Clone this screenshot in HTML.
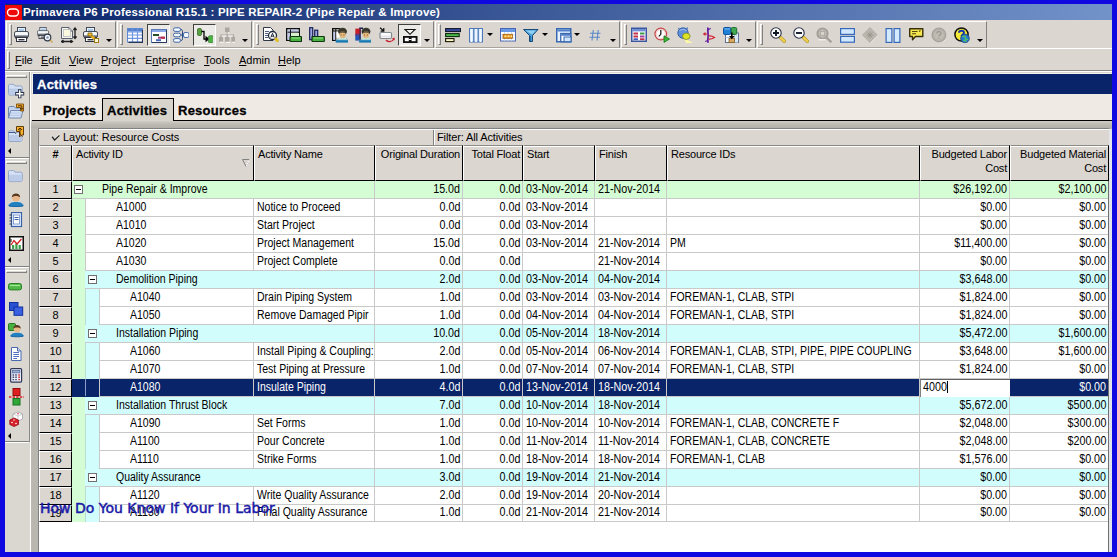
<!DOCTYPE html><html><head><meta charset="utf-8"><title>Primavera P6 Professional</title><style>
html,body{margin:0;padding:0}
body{width:1117px;height:557px;overflow:hidden;background:#1008e0;position:relative;font-family:"Liberation Sans",sans-serif;font-size:11px;color:#000}
.abs{position:absolute}
svg{display:block}
#win{position:absolute;left:5px;top:4px;width:1107px;height:548px;background:#dbd6d0;overflow:hidden}
#inner{position:absolute;left:0;top:1px;width:1107px;height:547px}
#title{position:absolute;left:0;top:0;width:1107px;height:16px;background:linear-gradient(90deg,#0a246a 0%,#7292ca 100%)}
#title .t{position:absolute;left:18px;top:1px;line-height:15px;font-weight:bold;font-size:11.5px;color:#fff;white-space:pre;letter-spacing:0.17px}
#logo{position:absolute;left:0;top:1px;width:17px;height:15px;background:#f00808}
.tb{position:absolute;top:16px;height:27px;border-top:1px solid #fff;border-left:1px solid #fff;border-right:1px solid #808080;border-bottom:1px solid #a8a49c;box-sizing:border-box;background:#dbd6d0}
.grip{position:absolute;top:2px;width:3px;height:21px;box-sizing:border-box;border-top:1px solid #fff;border-left:1px solid #fff;border-right:1px solid #808080;border-bottom:1px solid #808080}
.ic{position:absolute;top:5px;width:16px;height:16px}
.pr{position:absolute;top:2px;height:22px;box-sizing:border-box;border-top:1px solid #404040;border-left:1px solid #404040;border-right:1px solid #fff;border-bottom:1px solid #fff;background:#eceae6}
.dd{position:absolute;top:14px;width:0;height:0;border-left:3px solid transparent;border-right:3px solid transparent;border-top:3px solid #000}
#menu{position:absolute;left:0;top:43px;width:1107px;height:24px;border-top:1px solid #fff;box-sizing:border-box}
#menu span{position:absolute;top:5px;line-height:13px;font-size:11px;white-space:pre}
#menu u{text-decoration:underline}
#sepline{position:absolute;left:0;top:65px;width:1107px;height:1px;background:#8c8a84;border-bottom:1px solid #fff}
#side{position:absolute;left:0;top:67px;width:25px;height:480px;background:#dad7d0}
#sideedge{position:absolute;left:24px;top:67px;width:1px;height:370px;background:#8c8a84}
#sidegap{position:absolute;left:25px;top:67px;width:1px;height:480px;background:#fff}
#acthead{position:absolute;left:28px;top:69px;width:1079px;height:20px;background:#0a246a;box-shadow:-1px -1px 0 #f4f2ee}
#acthead span{position:absolute;left:4px;top:1px;line-height:20px;font-size:13px;font-weight:bold;color:#fff;letter-spacing:0.25px;-webkit-text-stroke:0.3px #fff}
#tabs{position:absolute;left:26px;top:89px;width:1081px;height:26px;background:#efeae4}
.tab{position:absolute;top:6px;line-height:20px;font-size:13px;font-weight:bold;white-space:pre;letter-spacing:0.25px;-webkit-text-stroke:0.3px #000}
#tabline{position:absolute;left:27px;top:115px;width:1080px;height:1px;background:#000}
#tabsel{position:absolute;left:97px;top:93px;width:72px;height:23px;box-sizing:border-box;border:1px solid #000;border-bottom:none;background:#d8d4cc}
#panel{position:absolute;left:26px;top:116px;width:1081px;height:431px;background:linear-gradient(180deg,#d0cdc6 0px,#bebbb4 3px,#b2afa8 7px,#bab7b0 8px)}
#panelb{position:absolute;left:33px;top:123px;width:1071px;height:424px;background:#808080}
#grid{position:absolute;left:34px;top:124px;width:1073px;height:423px;background:#fff}
#laybar{position:absolute;left:0;top:0;width:1073px;height:16px;background:#dbd6d0;border-top:1px solid #fff;box-sizing:border-box}
#hdr{position:absolute;left:0;top:16px;width:1073px;height:36px;background:#dbd6d0}
.hc{position:absolute;top:0;height:36px;box-sizing:border-box;border-right:1px solid #000;border-bottom:1px solid #000;border-top:1px solid #8c8a84;border-left:1px solid #fff;box-shadow:inset 0 1px 0 #fff;font-size:11px;line-height:14px;letter-spacing:-0.2px;white-space:pre}
.hc span{position:absolute;top:1px}
.hc span.rr{right:2px;text-align:right}
.row{position:absolute;left:0;width:1069px;height:18px}
.num{position:absolute;left:0;top:0;width:33px;height:18px;box-sizing:border-box;background:#dbd6d0;border-top:1px solid #fff;border-left:1px solid #fff;border-right:1px solid #000;border-bottom:1px solid #000;text-align:center;line-height:15px;font-size:11px}
.c{position:absolute;top:0;height:18px;box-sizing:border-box;border-right:1px solid #c9c9c9;border-bottom:1px solid #c9c9c9;line-height:16px;font-size:11px;white-space:pre;overflow:hidden}
.c.r{text-align:right;padding-right:2px}
.tx,.tn{display:inline-block;font-size:12px;transform:scaleX(0.875);transform-origin:0 50%}
.tn{transform:scaleX(0.895)}
.c.r .tn,.c.r .tx{transform-origin:100% 50%}
.c.l{padding-left:3px}
.row.last,.row.last .c,.row.last .num{height:17px}
.row.last .c{line-height:15px}
.row.last .num{line-height:14px}
.g0{background:#d5fdd5}
.g1{background:#d2fdfd}
.w{background:#fff}
.sel{background:#0a246a;color:#fff}
.box{position:absolute;top:4px;width:9px;height:9px;box-sizing:border-box;border:1px solid #707070;background:#fff}
.box:after{content:"";position:absolute;left:1px;top:3px;width:5px;height:1px;background:#000}
#wm{position:absolute;left:35px;top:495px;font-family:"DejaVu Sans",sans-serif;font-size:14px;color:#1a1aa8;-webkit-text-stroke:0.5px #1a1aa8;white-space:pre;line-height:16px}
</style></head><body>
<div id="win">
<div id="title"><div id="logo"><svg width="16" height="15" viewBox="0 0 16 15"><rect x="2.5" y="4" width="11" height="7" rx="3.5" ry="3.5" fill="none" stroke="#fff" stroke-width="1.4"/></svg></div><div class="t">Primavera P6 Professional R15.1 : PIPE REPAIR-2 (Pipe Repair &amp; Improve)</div></div>
<div id="inner">
<div class="tb" style="left:1px;width:110px"><div class="grip" style="left:2px"></div><div class="ic" style="left:7px"><svg width="16" height="16" viewBox="0 0 16 16"><rect x="3.5" y="0.5" width="8" height="5" fill="#e8f4ff" stroke="#404858"/><rect x="5" y="2" width="5" height="2" fill="#a8c8e8"/><rect x="0.5" y="4.5" width="14" height="6" rx="1.5" fill="#f4f6f8" stroke="#484e5c"/><rect x="1" y="8" width="13" height="2" fill="#9aa0aa"/><rect x="1" y="9.5" width="13" height="2" fill="#30343e"/><rect x="2.5" y="10.5" width="10" height="4" fill="#fff" stroke="#30343e"/><rect x="4.5" y="12" width="6" height="1.4" fill="#30343e"/></svg></div><div class="ic" style="left:30px"><svg width="16" height="16" viewBox="0 0 16 16"><g transform="scale(0.8)"><rect x="3.5" y="0.5" width="8" height="5" fill="#e8f4ff" stroke="#404858"/><rect x="5" y="2" width="5" height="2" fill="#a8c8e8"/><rect x="0.5" y="4.5" width="14" height="6" rx="1.5" fill="#f4f6f8" stroke="#484e5c"/><rect x="1" y="8" width="13" height="2" fill="#9aa0aa"/><rect x="1" y="9.5" width="13" height="2" fill="#30343e"/><rect x="2.5" y="10.5" width="10" height="4" fill="#fff" stroke="#30343e"/><rect x="4.5" y="12" width="6" height="1.4" fill="#30343e"/></g><circle cx="10.5" cy="10.5" r="3.3" fill="#f4f8ff" stroke="#303848" stroke-width="1.2"/><circle cx="10.5" cy="10.5" r="1.3" fill="#8898b8"/><path d="M13 13 L15.5 15.5" stroke="#c8a040" stroke-width="1.3"/></svg></div><div class="ic" style="left:54px"><svg width="16" height="16" viewBox="0 0 16 16"><path d="M0.5 0.5 H8 L11.5 4 V11.5 H0.5 Z" fill="#f6f6ee" stroke="#586070"/><path d="M8 0.5 V4 H11.5" fill="#dfe6f0" stroke="#586070"/><rect x="2.5" y="2.5" width="7" height="7" fill="#fbf8e0" stroke="#707888" stroke-width="0.8" stroke-dasharray="1,1"/><path d="M14 1.5 V10.5 M12.5 3 L14 1 L15.5 3 M12.5 9.5 L14 11.5 L15.5 9.5" stroke="#202020" stroke-width="1.3" fill="none"/><path d="M1 14.5 H11 M2.5 13 L0.5 14.5 L2.5 16 M9.5 13 L11.5 14.5 L9.5 16" stroke="#202020" stroke-width="1.3" fill="none"/></svg></div><div class="ic" style="left:76px"><svg width="16" height="16" viewBox="0 0 16 16"><rect x="3.5" y="0.5" width="8" height="5" fill="#e8f4ff" stroke="#404858"/><rect x="5" y="2" width="5" height="2" fill="#a8c8e8"/><rect x="0.5" y="4.5" width="14" height="6" rx="1.5" fill="#f4f6f8" stroke="#484e5c"/><rect x="1" y="8" width="13" height="2" fill="#9aa0aa"/><rect x="1" y="9.5" width="13" height="2" fill="#30343e"/><rect x="2.5" y="10.5" width="10" height="4" fill="#fff" stroke="#30343e"/><rect x="4.5" y="12" width="6" height="1.4" fill="#30343e"/><path d="M6 7 L14 14" stroke="#e8b020" stroke-width="2.4"/><path d="M5 6 h4 v3 h-4z" fill="#f0c030" stroke="#7a5a10" stroke-width="0.8"/><rect x="11.5" y="11.5" width="4" height="4" fill="#fff8d0" stroke="#a07818" stroke-width="1"/></svg></div><div class="dd" style="left:99px;top:17px"></div></div>
<div class="tb" style="left:112px;width:135px"><div class="grip" style="left:2px"></div><div class="pr" style="left:29px;width:23px"></div><div class="pr" style="left:75px;width:23px"></div><div class="ic" style="left:9px"><svg width="16" height="16" viewBox="0 0 16 16"><rect x="0.5" y="1.5" width="15" height="13.5" fill="#fff" stroke="#6088d0"/><rect x="1" y="2" width="14" height="2.2" fill="#5080d0"/><path d="M1 4.8 H15 M1 8 H15 M1 11.4 H15 M5.5 2 V15 M10.5 2 V15" stroke="#7098e0" stroke-width="1.2"/><path d="M15.5 3 V15.3 H1.5" stroke="#283858" stroke-width="1.2" fill="none"/></svg></div><div class="ic" style="left:33px"><svg width="16" height="16" viewBox="0 0 16 16"><rect x="0.5" y="2.5" width="15" height="13" fill="#fff" stroke="#5878b8"/><rect x="1" y="3" width="14" height="2" fill="#88a8e8"/><rect x="2" y="7" width="6" height="2" fill="#285028"/><rect x="7" y="9.7" width="7" height="2" fill="#a04878"/><rect x="10" y="9.7" width="4" height="2" fill="#c03050"/><rect x="5" y="12.2" width="5" height="2" fill="#4868b8"/><path d="M15.5 3 V15.5 H1" stroke="#283858" stroke-width="1" fill="none"/></svg></div><div class="ic" style="left:55px"><svg width="16" height="16" viewBox="0 0 16 16"><path d="M7 2.5 H8 C9.5 2.5 9.5 4 9.5 5 V11 C9.5 12 9.5 13.5 8 13.5 H7 M7 8 H11" stroke="#284880" stroke-width="1" fill="none"/><rect x="0.5" y="0.8" width="7" height="3.6" rx="1.6" fill="#f4f8ff" stroke="#4068a8"/><rect x="0.5" y="6.2" width="7" height="3.6" rx="1.6" fill="#f4f8ff" stroke="#4068a8"/><rect x="0.5" y="11.6" width="7" height="3.6" rx="1.6" fill="#f4f8ff" stroke="#4068a8"/><rect x="10.5" y="5.5" width="5.5" height="5" rx="1.6" fill="#f4f8ff" stroke="#4068a8"/></svg></div><div class="ic" style="left:79px"><svg width="16" height="16" viewBox="0 0 16 16"><rect x="0.5" y="1.5" width="4" height="7" rx="1.2" fill="#58a040" stroke="#386828" stroke-width="0.8"/><path d="M4.5 4.5 H7 V12 H9" stroke="#000" stroke-width="1.3" fill="none"/><path d="M8.5 8.8 L12.5 12 L8.5 15.2Z" fill="#000"/><rect x="11.5" y="8.8" width="5" height="7" rx="1.2" fill="#50b048" stroke="#388030" stroke-width="0.8"/></svg></div><div class="ic" style="left:101px"><svg width="16" height="16" viewBox="0 0 16 16"><rect x="6" y="0.5" width="4.5" height="4.5" fill="#aca8a0"/><path d="M8.2 5 V8 M2 10 V8 H14.5 V10 M8.2 8 V10" stroke="#aca8a0" fill="none" stroke-width="1.2"/><path d="M9.3 5.5 V7.2 M3 9 H7.3 M9.3 9 H13.6" stroke="#fff" fill="none" stroke-width="0.9"/><rect x="0" y="10" width="4" height="4.8" fill="#aca8a0"/><rect x="6" y="10" width="4.5" height="4.8" fill="#aca8a0"/><rect x="12.3" y="10" width="4" height="4.8" fill="#aca8a0"/><path d="M1 15.3 H4.5 M7 15.3 H11 M13.3 15.3 H16" stroke="#fff" stroke-width="0.9"/></svg></div><div class="dd" style="left:124px;top:17px"></div></div>
<div class="tb" style="left:248px;width:181px"><div class="grip" style="left:2px"></div><div class="pr" style="left:144px;width:23px"></div><div class="ic" style="left:9px"><svg width="16" height="16" viewBox="0 0 16 16"><path d="M0.5 0.5 H7.5 L10 3 V13.5 H0.5 Z" fill="#fff" stroke="#303848"/><path d="M2 4.5 H6 M2 6.5 H5 M2 8.5 H5 M2 10.5 H5" stroke="#506080" stroke-width="1"/><circle cx="9.5" cy="8.5" r="4" fill="#fff" stroke="#202838" stroke-width="1.3"/><path d="M7.8 10.5 L9.5 6.3 L11.2 10.5 M8.4 9.2 H10.6" stroke="#202838" stroke-width="1" fill="none"/><path d="M13 12 L14.3 13.6" stroke="#e0c020" stroke-width="3" stroke-linecap="round"/></svg></div><div class="ic" style="left:32px"><svg width="16" height="16" viewBox="0 0 16 16"><rect x="0.75" y="1.75" width="12.5" height="11.5" fill="#fff" stroke="#101010" stroke-width="1.5"/><rect x="1.5" y="2.5" width="11" height="2.5" fill="#c0c8e8"/><rect x="1.5" y="5" width="3" height="8" fill="#c0c8e8"/><path d="M4.5 2.5 V13 M1.5 5.2 H13" stroke="#101010" stroke-width="1"/><rect x="5" y="6" width="8" height="3" fill="#d8f0d0"/><rect x="4" y="9.5" width="11.5" height="5" rx="0.5" fill="#48b040" stroke="#103810" stroke-width="1.2"/><path d="M5.5 11 H14" stroke="#90e080" stroke-width="1"/></svg></div><div class="ic" style="left:55px"><svg width="16" height="16" viewBox="0 0 16 16"><rect x="0.7" y="0.7" width="3" height="12" fill="#a0a8e0" stroke="#182058" stroke-width="1.2"/><rect x="5.7" y="3.2" width="3" height="9.5" fill="#a0a8e0" stroke="#182058" stroke-width="1.2"/><rect x="3" y="9.5" width="12.3" height="5" rx="0.5" fill="#48b040" stroke="#103810" stroke-width="1.2"/><path d="M4.5 11 H14" stroke="#90e080" stroke-width="1"/></svg></div><div class="ic" style="left:78px"><svg width="16" height="16" viewBox="0 0 16 16"><path d="M8 1.6 H0.7 V13.3 H4" fill="none" stroke="#101010" stroke-width="1.4"/><rect x="1.4" y="4" width="2" height="9" fill="#c0c8ec"/><path d="M3.8 1.6 V13 M0.7 4 H8" stroke="#101010" stroke-width="1"/><rect x="4.5" y="4.6" width="4" height="6" fill="#fff"/><path d="M5.3 14 C5.3 11.2 8.5 10.4 10.5 10.4 C12.5 10.4 15.7 11.2 15.7 14 Z" fill="#e4f4dc" stroke="#90b0a0" stroke-width="0.5"/><rect x="3.7" y="13" width="13.5" height="2.6" fill="#1878b0"/><rect x="3.7" y="12.6" width="13.5" height="0.8" fill="#58a8d8"/><ellipse cx="10.5" cy="4.6" rx="4.4" ry="3.9" fill="#38382c"/><ellipse cx="10.5" cy="7.6" rx="3.1" ry="3.3" fill="#e6b67a"/><path d="M7.1 6.3 C9.0 3.6 12.0 3.6 13.9 6.3 C12.0 5.2 9.0 5.2 7.1 6.3Z" fill="#38382c"/><path d="M8.5 8 h1 M11.5 8 h1" stroke="#604020" stroke-width="0.8"/><path d="M8.9 10.6 L10.5 12.4 L12.1 10.6" stroke="#a0c0a8" stroke-width="0.7" fill="none"/></svg></div><div class="ic" style="left:101px"><svg width="16" height="16" viewBox="0 0 16 16"><rect x="0.3" y="1.6" width="4" height="6" fill="#c82028"/><rect x="0.3" y="7.6" width="4" height="6" fill="#2058b8"/><rect x="0.3" y="6.6" width="4" height="2" fill="#703878"/><path d="M8 1.2 H5 V13.6 H8" fill="none" stroke="#182058" stroke-width="1.6"/><path d="M4.8 1.4 V7" stroke="#a01828" stroke-width="1.2"/><path d="M5.8 14 C5.8 11.2 9 10.4 11 10.4 C13 10.4 16.2 11.2 16.2 14 Z" fill="#e4f4dc" stroke="#90b0a0" stroke-width="0.5"/><rect x="4.2" y="13" width="13.5" height="2.6" fill="#1878b0"/><rect x="4.2" y="12.6" width="13.5" height="0.8" fill="#58a8d8"/><ellipse cx="11" cy="4.6" rx="4.4" ry="3.9" fill="#38382c"/><ellipse cx="11" cy="7.6" rx="3.1" ry="3.3" fill="#e6b67a"/><path d="M7.6 6.3 C9.5 3.6 12.5 3.6 14.4 6.3 C12.5 5.2 9.5 5.2 7.6 6.3Z" fill="#38382c"/><path d="M9 8 h1 M12 8 h1" stroke="#604020" stroke-width="0.8"/><path d="M9.4 10.6 L11 12.4 L12.6 10.6" stroke="#a0c0a8" stroke-width="0.7" fill="none"/></svg></div><div class="ic" style="left:125px"><svg width="16" height="16" viewBox="0 0 16 16"><path d="M1 0.8 L4.5 3.8 M4.8 1 V4.2 H1.6" stroke="#101010" stroke-width="1.2" fill="none"/><rect x="1" y="5.5" width="11.5" height="6" rx="1.2" fill="#fcfcfc" stroke="#808890" stroke-width="1.2"/><rect x="2" y="8.6" width="9.5" height="1.8" fill="#e0e2e8"/><path d="M7 13 C9 15.5 13 15.3 14.8 12" stroke="#c82030" stroke-width="1.3" fill="none"/><path d="M13 11.6 L15.6 10.6 L15.6 13.6Z" fill="#c82030"/></svg></div><div class="ic" style="left:148px"><svg width="16" height="16" viewBox="0 0 16 16"><path d="M3 2.5 H13 L8 7.3 Z" fill="#f8f8f4" stroke="#101010" stroke-width="1.1"/><rect x="1" y="9" width="14.5" height="7" fill="#101010"/><rect x="2.8" y="10.8" width="4" height="3.4" fill="#fff"/><rect x="9.6" y="10.8" width="4" height="3.4" fill="#fff"/><rect x="6.8" y="12" width="2.8" height="1" fill="#fff"/></svg></div><div class="dd" style="left:170px;top:17px"></div></div>
<div class="tb" style="left:430px;width:185px"><div class="grip" style="left:2px"></div><div class="ic" style="left:9px"><svg width="16" height="16" viewBox="0 0 16 16"><rect x="0.6" y="1.6" width="15" height="3" fill="#3848a0" stroke="#101828" stroke-width="1.1"/><rect x="0.6" y="6.6" width="13.6" height="3" fill="#48b848" stroke="#102810" stroke-width="1.1"/><rect x="0.6" y="11.6" width="8.4" height="3" fill="#fff8c0" stroke="#181808" stroke-width="1.1"/></svg></div><div class="ic" style="left:33px"><svg width="16" height="16" viewBox="0 0 16 16"><rect x="0.5" y="1.5" width="13" height="13.5" fill="#d8ecff" stroke="#5078b8"/><path d="M4.8 1.5 V15 M9.2 1.5 V15" stroke="#4870b0" stroke-width="1.2"/><path d="M2.5 2 V15 M7 2 V15 M11.5 2 V15" stroke="#f4faff" stroke-width="1.4"/></svg></div><div class="ic" style="left:64px"><svg width="16" height="16" viewBox="0 0 16 16"><rect x="0.5" y="1.5" width="15" height="12.5" fill="#fff" stroke="#4868b0"/><rect x="1" y="2" width="14" height="3" fill="#6898e8"/><path d="M1 8 H15 M1 11 H15 M4.5 5 V14 M8 5 V14 M11.5 5 V14" stroke="#c8d4ec" stroke-width="0.8"/><rect x="3" y="7.3" width="9.5" height="4" fill="#e89820" stroke="#a06010" stroke-width="0.8"/><path d="M4.5 9.3 h1.8 m1.4 0 h1.8 m1.2 0 h1.4" stroke="#ffe8a0" stroke-width="1.4"/></svg></div><div class="ic" style="left:87px"><svg width="16" height="16" viewBox="0 0 16 16"><path d="M0.5 2.5 H15 L9.5 8.5 V14.5 H6.5 V8.5 Z" fill="#48a0d8" stroke="#184878" stroke-width="1"/><path d="M2.5 3.5 H13 L9 7.5" fill="#90d0f0" stroke="none"/><path d="M7.5 9 V14" stroke="#2070b0" stroke-width="1"/></svg></div><div class="ic" style="left:120px"><svg width="16" height="16" viewBox="0 0 16 16"><rect x="0.75" y="1.75" width="14" height="13" fill="#e8f2ff" stroke="#3868b0" stroke-width="1.5"/><rect x="1.5" y="2.5" width="12.5" height="2" fill="#5080c8"/><rect x="4.75" y="6.5" width="10" height="8.2" fill="#fff" stroke="#3868b0" stroke-width="1.3"/><rect x="5.4" y="7" width="9" height="1.8" fill="#5080c8"/><rect x="8" y="10" width="7" height="4.7" fill="#d0e4ff" stroke="#3868b0" stroke-width="1"/></svg></div><div class="ic" style="left:151px"><svg width="16" height="16" viewBox="0 0 16 16"><path d="M6.3 3 L5 13.5 M11.3 3 L10 13.5 M3 6.3 H13.5 M2.5 10.3 H13" stroke="#5888c8" stroke-width="1.1" fill="none"/></svg></div><div class="dd" style="left:51px;top:11px"></div><div class="dd" style="left:106px;top:11px"></div><div class="dd" style="left:138px;top:11px"></div><div class="dd" style="left:174px;top:17px"></div></div>
<div class="tb" style="left:616px;width:135px"><div class="grip" style="left:2px"></div><div class="ic" style="left:9px"><svg width="16" height="16" viewBox="0 0 16 16"><rect x="0.75" y="1.25" width="14.5" height="13" fill="#fff" stroke="#3858a0" stroke-width="1.5"/><rect x="1.5" y="2" width="13" height="2.4" fill="#7090d8"/><rect x="2.5" y="5.5" width="4.5" height="2" fill="#c03048"/><rect x="9" y="5.5" width="4.5" height="2" fill="#38a048"/><rect x="2.5" y="8.5" width="4.5" height="2" fill="#c03048"/><rect x="9" y="8.5" width="4.5" height="2" fill="#a040a0"/><rect x="2.5" y="11.3" width="4.5" height="1.8" fill="#4060c0"/><rect x="9" y="11.3" width="4.5" height="1.8" fill="#c03048"/></svg></div><div class="ic" style="left:32px"><svg width="16" height="16" viewBox="0 0 16 16"><circle cx="6.8" cy="7" r="5.8" fill="#fff" stroke="#c84848" stroke-width="1.3"/><circle cx="6.8" cy="7" r="4.6" fill="none" stroke="#e8c0c0" stroke-width="0.8"/><path d="M6.8 3 V7.3 L4.8 9.3" stroke="#101010" stroke-width="1.2" fill="none"/><path d="M10 8.8 L15.5 12 L10 15.4Z" fill="#38b838" stroke="#187818" stroke-width="0.8"/></svg></div><div class="ic" style="left:55px"><svg width="16" height="16" viewBox="0 0 16 16"><path d="M1.5 1 L3 3.5 M10.5 0.5 L9.5 3" stroke="#4878c0" stroke-width="1.4"/><circle cx="6" cy="6" r="5.2" fill="#6090d8" stroke="#3860a8"/><path d="M2.5 4 C4 2 8 2 9.5 4" stroke="#a0c0f0" stroke-width="1.2" fill="none"/><path d="M7 11 L16 16 H9Z" fill="#fbf8a8"/><ellipse cx="9.3" cy="9.3" rx="3.8" ry="3.2" fill="#dce228" stroke="#707818" stroke-width="0.7"/></svg></div><div class="ic" style="left:78px"><svg width="16" height="16" viewBox="0 0 16 16"><path d="M8 0.5 C7.4 4 8.6 8 8 11 C7.6 13 8 14.5 8 15.8" stroke="#6018a0" stroke-width="1.7" fill="none"/><path d="M8 2.8 L10.8 1.6 M5.2 14.6 L8 13.6" stroke="#6018a0" stroke-width="1.1"/><path d="M7.5 7 H4 M5.5 5.6 L3.6 7 L5.5 8.4" stroke="#d02030" stroke-width="1.1" fill="none"/><path d="M8.5 9 C11 8.4 12.5 9 14.5 10.4 C12.5 11.6 11 12.4 8.5 12" stroke="#d02030" stroke-width="1.2" fill="none"/></svg></div><div class="ic" style="left:101px"><svg width="16" height="16" viewBox="0 0 16 16"><rect x="2.5" y="6" width="13" height="9.5" fill="#f8fbff" stroke="#607090" stroke-width="1"/><path d="M2.5 10.5 H15.5 M11.5 6 V15.5 M6.5 10.5 V15.5" stroke="#b0bcd0" stroke-width="0.8"/><rect x="12" y="6.5" width="3" height="9" fill="#d8e8f8"/><rect x="0.5" y="0.5" width="7.4" height="7" rx="1.2" fill="#2080d8" stroke="#1050a0"/><path d="M1.5 2 H7" stroke="#70b8f0" stroke-width="1.2"/><rect x="8.3" y="0.5" width="5.4" height="7" rx="1.2" fill="#40a850" stroke="#187030"/><rect x="6" y="11.5" width="5.5" height="4" fill="#d8a860" stroke="#806020" stroke-width="0.8"/><path d="M8.8 5.5 V10" stroke="#000" stroke-width="1.6"/><path d="M6 9 H11.6 L8.8 12.2Z" fill="#000"/></svg></div><div class="dd" style="left:124px;top:17px"></div></div>
<div class="tb" style="left:752px;width:230px"><div class="grip" style="left:2px"></div><div class="ic" style="left:12px"><svg width="16" height="16" viewBox="0 0 16 16"><path d="M10 10 L14.3 14.3" stroke="#b89828" stroke-width="3.4" stroke-linecap="round"/><path d="M10 10 L14.3 14.3" stroke="#f0d050" stroke-width="2.2" stroke-linecap="round"/><circle cx="6" cy="6" r="5.2" fill="#fff" stroke="#283048" stroke-width="1.1"/><path d="M3 6 H9 M6 3 V9" stroke="#101828" stroke-width="1.9"/></svg></div><div class="ic" style="left:35px"><svg width="16" height="16" viewBox="0 0 16 16"><path d="M10 10 L14.3 14.3" stroke="#b89828" stroke-width="3.4" stroke-linecap="round"/><path d="M10 10 L14.3 14.3" stroke="#f0d050" stroke-width="2.2" stroke-linecap="round"/><circle cx="6" cy="6" r="5.2" fill="#fff" stroke="#283048" stroke-width="1.1"/><path d="M3 6 H9" stroke="#101828" stroke-width="1.9"/></svg></div><div class="ic" style="left:58px"><svg width="16" height="16" viewBox="0 0 16 16"><path d="M10.5 10.5 L14.5 14.5" stroke="#fff" stroke-width="3.6" stroke-linecap="round" transform="translate(0.8,0.8)"/><path d="M10.5 10.5 L14.5 14.5" stroke="#a8a49c" stroke-width="3" stroke-linecap="round"/><circle cx="6.5" cy="6.5" r="5" fill="#cfcbc3" stroke="#a4a098" stroke-width="2.2"/><rect x="4.2" y="4.2" width="4.6" height="4.6" fill="#d8d4cc" stroke="#a4a098" stroke-width="1"/><path d="M2.5 12.8 H9" stroke="#fff" stroke-width="1"/></svg></div><div class="ic" style="left:81px"><svg width="16" height="16" viewBox="0 0 16 16"><rect x="1.6" y="1.6" width="13.8" height="5.8" fill="#d0e8ff" stroke="#3868b8" stroke-width="1.2"/><rect x="1.6" y="9.4" width="13.8" height="5.8" fill="#d0e8ff" stroke="#3868b8" stroke-width="1.2"/></svg></div><div class="ic" style="left:104px"><svg width="16" height="16" viewBox="0 0 16 16"><path d="M8.8 1.4 L16 8.6 L8.8 15.8 L1.6 8.6Z" fill="#fff"/><path d="M8 0.6 L15.4 8 L8 15.4 L0.6 8Z" fill="#bcb8b0" stroke="#a8a49c" stroke-width="0.8"/><path d="M8 4.5 V11.5 M4.5 8 H11.5 M5.5 5.5 L10.5 10.5 M10.5 5.5 L5.5 10.5" stroke="#98948c" stroke-width="0.9"/></svg></div><div class="ic" style="left:127px"><svg width="16" height="16" viewBox="0 0 16 16"><rect x="1.1" y="1.6" width="5.8" height="13.8" fill="#d4eaff" stroke="#3868b8" stroke-width="1.2"/><rect x="9.1" y="1.6" width="5.8" height="13.8" fill="#d4eaff" stroke="#3868b8" stroke-width="1.2"/></svg></div><div class="ic" style="left:150px"><svg width="16" height="16" viewBox="0 0 16 16"><path d="M1.7 1.7 H14.8 V9.5 H7.5 L4.5 12.8 V9.5 H1.7 Z" fill="#f8e850" stroke="#383008" stroke-width="1.4" stroke-linejoin="round"/><path d="M4 4.5 H9.5 M4 6.8 H8 M11 4.5 L12.5 3.5" stroke="#504810" stroke-width="1.1"/></svg></div><div class="ic" style="left:173px"><svg width="16" height="16" viewBox="0 0 16 16"><circle cx="8.5" cy="8.5" r="7" fill="#fff"/><circle cx="8" cy="8" r="7" fill="#b4b0a8" stroke="#a09c94"/><circle cx="8" cy="8" r="5" fill="#c0bcb4"/><path d="M6 6.5 C6 4 10 4 10 6.3 C10 8 8 7.8 8 9.5 M8 11 V12" stroke="#a09c94" stroke-width="1.5" fill="none"/></svg></div><div class="ic" style="left:196px"><svg width="16" height="16" viewBox="0 0 16 16"><circle cx="7.5" cy="7.5" r="6.6" fill="#f4e838" stroke="#101010" stroke-width="1.5"/><path d="M5 5.8 C5 3 10 3 10 5.8 C10 7.5 7.5 7.5 7.5 9.3" stroke="#1838a8" stroke-width="2" fill="none"/><circle cx="11" cy="11.5" r="4.3" fill="#2878d0" stroke="#104080" stroke-width="0.8"/><path d="M8.5 10 C10 8.5 12 9.5 11.5 11 C11 12.5 13 13 14 12 M9.5 14 C10 12.5 11.5 13.5 12 15" stroke="#50c060" stroke-width="1.4" fill="none"/></svg></div><div class="dd" style="left:219px;top:17px"></div></div>
<div id="menu"><div class="grip" style="left:2px;top:2px;height:18px"></div>
<span style="left:10px"><u>F</u>ile</span>
<span style="left:36px"><u>E</u>dit</span>
<span style="left:64px"><u>V</u>iew</span>
<span style="left:96px"><u>P</u>roject</span>
<span style="left:140px">E<u>n</u>terprise</span>
<span style="left:199px"><u>T</u>ools</span>
<span style="left:234px"><u>A</u>dmin</span>
<span style="left:273px"><u>H</u>elp</span>
</div>
<div id="sepline"></div>
<div id="side"><div class="abs" style="left:1px;top:3px;width:21px;height:3px;box-sizing:border-box;border-top:1px solid #fff;border-left:1px solid #fff;border-right:1px solid #808080;border-bottom:1px solid #808080"></div><div class="abs" style="left:3px;top:11px;width:17px;height:16px"><svg width="17" height="16" viewBox="0 0 17 16"><g transform="scale(0.95,0.86)"><path d="M0.5 3.5 C0.5 2 1 1.5 2.5 1.5 H6 L7.5 3.5 H13.5 C14.5 3.5 15 4 15 5 V12 C15 13.5 14 14 13 14 H2 C1 14 0.5 13.5 0.5 12 Z" fill="#d4e0f4" stroke="#8ca0c4"/><path d="M1 6.5 H14.5 V12 C14.5 13 14 13.5 13 13.5 H2 C1.2 13.5 1 13 1 12Z" fill="#bccce8"/></g><path d="M11.7 6.3 V15.3 M7.2 10.8 H16.2" stroke="#283048" stroke-width="3.4"/><path d="M11.7 7.2 V14.4 M8.1 10.8 H15.3" stroke="#fff" stroke-width="1.6"/></svg></div><div class="abs" style="left:3px;top:31px;width:17px;height:16px"><svg width="17" height="16" viewBox="0 0 17 16"><path d="M0.5 5 C0.5 4 1 3.5 2 3.5 H6 L7.5 5 H13.5 V8 H3 L0.5 14.5Z" fill="#c4d4ec" stroke="#7088b0"/><path d="M2.8 7.5 H15 L13 15 H0.5 Z" fill="#d4e2f8" stroke="#7088b0"/><path d="M3 10 H13.5 M2.3 12.3 H13" stroke="#b0c4e4" stroke-width="0.9"/><path d="M8.5 1 H15.5 V8 H12.5 V4.5 H8.5Z" fill="#f8b030" stroke="#7a4a08" stroke-width="0.9"/><path d="M10 2.8 H13.8 V6 M12.3 5 L13.8 6.8 L15.2 5" stroke="#503000" stroke-width="1" fill="none"/></svg></div><div class="abs" style="left:3px;top:54px;width:17px;height:17px"><svg width="17" height="17" viewBox="0 0 17 17"><g transform="translate(0,3.5) scale(0.93,0.86)"><path d="M0.5 3.5 C0.5 2 1 1.5 2.5 1.5 H6 L7.5 3.5 H13.5 C14.5 3.5 15 4 15 5 V12 C15 13.5 14 14 13 14 H2 C1 14 0.5 13.5 0.5 12 Z" fill="#d4e0f4" stroke="#8ca0c4"/><path d="M1 6.5 H14.5 V12 C14.5 13 14 13.5 13 13.5 H2 C1.2 13.5 1 13 1 12Z" fill="#bccce8"/></g><path d="M0.5 6.5 H7 L8 8" stroke="#405888" stroke-width="1" fill="none"/><path d="M8.5 0.5 H15.5 V9 H13.5 L11.5 11 V5.5 H8.5Z" fill="#f8b030" stroke="#503000" stroke-width="0.9"/><path d="M10 4 L12 2 L14 4 M12 2.5 V7 C12 8.5 13 9.5 14.5 10.5" stroke="#503000" stroke-width="1" fill="none"/></svg></div><div class="abs" style="left:3px;top:76px;width:0;height:0;border-top:3px solid transparent;border-bottom:3px solid transparent;border-right:3px solid #000"></div><div class="abs" style="left:0;top:85px;width:24px;height:1px;background:#808080"></div><div class="abs" style="left:0;top:86px;width:24px;height:1px;background:#fff"></div><div class="abs" style="left:1px;top:89px;width:21px;height:3px;box-sizing:border-box;border-top:1px solid #fff;border-left:1px solid #fff;border-right:1px solid #808080;border-bottom:1px solid #808080"></div><div class="abs" style="left:3px;top:98px;width:16px;height:14px"><svg width="16" height="14" viewBox="0 0 16 14"><g transform="translate(0,-1) scale(0.95,0.9)"><path d="M0.5 3.5 C0.5 2 1 1.5 2.5 1.5 H6 L7.5 3.5 H13.5 C14.5 3.5 15 4 15 5 V12 C15 13.5 14 14 13 14 H2 C1 14 0.5 13.5 0.5 12 Z" fill="#d4e0f4" stroke="#8ca0c4"/><path d="M1 6.5 H14.5 V12 C14.5 13 14 13.5 13 13.5 H2 C1.2 13.5 1 13 1 12Z" fill="#bccce8"/></g></svg></div><div class="abs" style="left:3px;top:119px;width:16px;height:16px"><svg width="16" height="16" viewBox="0 0 16 16"><path d="M1 15.5 C1 12 3 11 8 11 C13 11 15 12 15 15.5 Z" fill="#2080c0"/><path d="M0.5 13.5 C3 15.5 13 15.5 15.5 13.5 V15 C13 16.5 3 16.5 0.5 15Z" fill="#1868a8"/><circle cx="8" cy="6.8" r="3.8" fill="#e8b888"/><path d="M3.8 6.5 C3.5 1 12.5 1 12.2 6.5 C10.5 4.5 5.5 4.5 3.8 6.5Z" fill="#5a3820"/></svg></div><div class="abs" style="left:3px;top:140px;width:16px;height:16px"><svg width="16" height="16" viewBox="0 0 16 16"><rect x="3.5" y="0.5" width="10" height="14" fill="#e8f0ff" stroke="#3860a8" stroke-width="1.2"/><rect x="5.5" y="3" width="6" height="9" fill="#fff" stroke="#6888c8" stroke-width="0.8"/><path d="M6.5 5.5 H10.5 M6.5 7.5 H10.5" stroke="#3860a8" stroke-width="1"/><path d="M1.5 3 H4 M1.5 6 H4 M1.5 9 H4 M1.5 12 H4" stroke="#303848" stroke-width="1.2"/></svg></div><div class="abs" style="left:4px;top:164px;width:15px;height:15px"><svg width="15" height="15" viewBox="0 0 15 15"><rect x="0.75" y="0.75" width="13.5" height="13.5" fill="#fff" stroke="#101010" stroke-width="1.5"/><rect x="3" y="9" width="2.2" height="4" fill="#38a048"/><rect x="6.3" y="7.5" width="2.2" height="5.5" fill="#38a048"/><rect x="9.6" y="9" width="2.2" height="4" fill="#38a048"/><path d="M2 9 L5 4.5 L8 8 L12.5 3" stroke="#d02020" stroke-width="1.3" fill="none"/><path d="M2 3 V6" stroke="#101010"/></svg></div><div class="abs" style="left:3px;top:185px;width:0;height:0;border-top:3px solid transparent;border-bottom:3px solid transparent;border-right:3px solid #000"></div><div class="abs" style="left:0;top:194px;width:24px;height:1px;background:#808080"></div><div class="abs" style="left:0;top:195px;width:24px;height:1px;background:#fff"></div><div class="abs" style="left:1px;top:198px;width:21px;height:3px;box-sizing:border-box;border-top:1px solid #fff;border-left:1px solid #fff;border-right:1px solid #808080;border-bottom:1px solid #808080"></div><div class="abs" style="left:3px;top:211px;width:14px;height:8px"><svg width="14" height="8" viewBox="0 0 14 8"><rect x="0.5" y="0.5" width="13" height="6.4" rx="2" fill="#50b848" stroke="#2a8028"/><path d="M2 2.5 H12" stroke="#a0e890" stroke-width="1.2"/></svg></div><div class="abs" style="left:4px;top:230px;width:16px;height:16px"><svg width="16" height="16" viewBox="0 0 16 16"><rect x="0.5" y="0.5" width="8.5" height="8" fill="#2850d0" stroke="#1030a0"/><rect x="5" y="5" width="8.7" height="8.3" fill="#3860e0" stroke="#1030a0"/></svg></div><div class="abs" style="left:3px;top:250px;width:16px;height:17px"><svg width="16" height="17" viewBox="0 0 16 17"><rect x="0.5" y="1.5" width="7" height="7" rx="1" fill="#48b040" stroke="#287820"/><g transform="translate(2,1) scale(0.88)"><path d="M1 15.5 C1 12 3 11 8 11 C13 11 15 12 15 15.5 Z" fill="#2080c0"/><path d="M0.5 13.5 C3 15.5 13 15.5 15.5 13.5 V15 C13 16.5 3 16.5 0.5 15Z" fill="#1868a8"/><circle cx="8" cy="6.8" r="3.8" fill="#e8b888"/><path d="M3.8 6.5 C3.5 1 12.5 1 12.2 6.5 C10.5 4.5 5.5 4.5 3.8 6.5Z" fill="#5a3820"/></g></svg></div><div class="abs" style="left:6px;top:275px;width:11px;height:15px"><svg width="11" height="15" viewBox="0 0 11 15"><path d="M0.5 0.5 H6.5 L10 4 V13.5 H0.5Z" fill="#fff" stroke="#4868b0"/><path d="M6.5 0.5 V4 H10" fill="#d0dcf8" stroke="#4868b0"/><path d="M2.3 5.5 H8 M2.3 7.5 H8 M2.3 9.5 H8 M2.3 11.5 H6" stroke="#5070c0" stroke-width="1"/></svg></div><div class="abs" style="left:5px;top:296px;width:13px;height:15px"><svg width="13" height="15" viewBox="0 0 13 15"><rect x="0.6" y="0.6" width="11" height="13.5" rx="1" fill="#e8ecf8" stroke="#303858" stroke-width="1.2"/><rect x="2.3" y="2.3" width="7.6" height="2.6" fill="#98b0d8" stroke="#485888" stroke-width="0.6"/><path d="M2.5 7 h1.6 m1.1 0 h1.6 M2.5 9.3 h1.6 m1.1 0 h1.6 M2.5 11.6 h1.6 m1.1 0 h1.6" stroke="#485070" stroke-width="1.4"/><path d="M8.3 7 h1.6 M8.3 9.3 h1.6 M8.3 11.6 h1.6" stroke="#d03030" stroke-width="1.4"/></svg></div><div class="abs" style="left:3px;top:316px;width:17px;height:18px"><svg width="17" height="18" viewBox="0 0 17 18"><rect x="5" y="0.5" width="7" height="7" fill="#e02020" stroke="#901010"/><path d="M1 9 H16" stroke="#e02020" stroke-width="1.6" stroke-dasharray="2.4,1.2"/><rect x="5" y="10.5" width="7" height="6.5" fill="#30a838" stroke="#187020"/></svg></div><div class="abs" style="left:4px;top:339px;width:14px;height:16px"><svg width="14" height="16" viewBox="0 0 14 16"><path d="M4 3 L9 0.8 L13.5 3 V8 L9 10 L4 8Z" fill="#fff" stroke="#a0a0a8" stroke-width="0.8"/><path d="M4 3 L9 5 L13.5 3 M9 5 V10" stroke="#b8b8c0" stroke-width="0.7" fill="none"/><circle cx="9" cy="2.8" r="0.8" fill="#d02020"/><path d="M0.8 9 L5 7 L9.5 9 V13.5 L5 15.5 L0.8 13.5Z" fill="#d82028" stroke="#901018" stroke-width="0.8"/><circle cx="3" cy="11.5" r="0.8" fill="#fff"/><circle cx="7" cy="12.5" r="0.8" fill="#fff"/><circle cx="5" cy="9" r="0.7" fill="#fff"/></svg></div><div class="abs" style="left:3px;top:361px;width:0;height:0;border-top:3px solid transparent;border-bottom:3px solid transparent;border-right:3px solid #000"></div><div class="abs" style="left:0;top:369px;width:24px;height:1px;background:#808080"></div><div class="abs" style="left:0;top:370px;width:24px;height:1px;background:#fff"></div></div><div id="sideedge"></div><div id="sidegap"></div>
<div id="acthead"><span>Activities</span></div>
<div id="tabs"></div>
<div id="panel"></div><div id="panelb"></div>
<div id="tabline"></div><div id="tabsel"></div>
<div class="tab" style="left:38px;top:96px">Projects</div>
<div class="tab" style="left:102px;top:96px">Activities</div>
<div class="tab" style="left:173px;top:96px">Resources</div>
<div id="grid">
<div id="laybar"><svg class="abs" style="left:10px;top:3px" width="11" height="8" viewBox="0 0 11 8"><path d="M2.6 2.8 L5.4 6.6 L10.2 1.6" fill="none" stroke="#fff" stroke-width="1.2"/><path d="M3 3.6 L5.6 7 L10.4 2.4" fill="none" stroke="#202020" stroke-width="1.3"/></svg><span class="abs" style="left:24px;top:0px;line-height:14px;letter-spacing:-0.05px;white-space:pre">Layout: Resource Costs</span><div class="abs" style="left:394px;top:0;width:1px;height:15px;background:#808080"></div><div class="abs" style="left:395px;top:0;width:1px;height:15px;background:#fff"></div><span class="abs" style="left:398px;top:0px;line-height:14px;letter-spacing:-0.12px;white-space:pre">Filter: All Activities</span></div>
<div id="hdr">
<div class="hc" style="left:0px;width:33px;"><span style="left:0;width:100%;text-align:center;font-weight:bold">#</span></div>
<div class="hc" style="left:33px;width:182px;"><span style="left:3px">Activity ID</span><svg class="abs" style="right:3px;top:13px" width="8" height="8" viewBox="0 0 8 8"><path d="M0.5 0.5 H7.5 L4 7.5 Z" fill="#dbd6d0" stroke="#808080"/><path d="M7.5 0.5 L4 7.5" stroke="#fff"/></svg></div>
<div class="hc" style="left:215px;width:121px;"><span style="left:3px">Activity Name</span></div>
<div class="hc" style="left:336px;width:88px;"><span class="rr">Original Duration</span></div>
<div class="hc" style="left:424px;width:60px;"><span class="rr">Total Float</span></div>
<div class="hc" style="left:484px;width:72px;"><span style="left:3px">Start</span></div>
<div class="hc" style="left:556px;width:72px;"><span style="left:3px">Finish</span></div>
<div class="hc" style="left:628px;width:253px;"><span style="left:3px">Resource IDs</span></div>
<div class="hc" style="left:881px;width:90px;"><span class="rr">Budgeted Labor
Cost</span></div>
<div class="hc" style="left:971px;width:99px;"><span class="rr">Budgeted Material
Cost</span></div>
</div>
<div class="row" style="top:52px">
<div class="num">1</div>
<div class="c g0" style="left:33px;width:302px;border-right:none"><div class="box" style="left:2px"></div><span class="abs tx" style="left:30px">Pipe Repair &amp; Improve</span></div>
<div class="c g0" style="left:335px;width:1px"></div>
<div class="c r g0" style="left:336px;width:88px"><span class="tn">15.0d</span></div>
<div class="c r g0" style="left:424px;width:60px"><span class="tn">0.0d</span></div>
<div class="c l g0" style="left:484px;width:72px"><span class="tn">03-Nov-2014</span></div>
<div class="c l g0" style="left:556px;width:72px"><span class="tn">21-Nov-2014</span></div>
<div class="c l g0" style="left:628px;width:253px"><span class="tx"></span></div>
<div class="c r g0" style="left:881px;width:90px"><span class="tn">$26,192.00</span></div>
<div class="c r g0" style="left:971px;width:99px"><span class="tn">$2,100.00</span></div>
</div>
<div class="row" style="top:70px">
<div class="num">2</div>
<div class="c g0" style="left:33px;width:13px;border:none"></div>
<div class="c w" style="left:46px;width:169px;border-left:1px solid #c9c9c9"><span class="abs tx" style="left:30px">A1000</span></div>
<div class="c l w" style="left:215px;width:121px"><span class="tx">Notice to Proceed</span></div>
<div class="c r w" style="left:336px;width:88px"><span class="tn">0.0d</span></div>
<div class="c r w" style="left:424px;width:60px"><span class="tn">0.0d</span></div>
<div class="c l w" style="left:484px;width:72px"><span class="tn">03-Nov-2014</span></div>
<div class="c l w" style="left:556px;width:72px"><span class="tn"></span></div>
<div class="c l w" style="left:628px;width:253px"><span class="tx"></span></div>
<div class="c r w" style="left:881px;width:90px"><span class="tn">$0.00</span></div>
<div class="c r w" style="left:971px;width:99px"><span class="tn">$0.00</span></div>
</div>
<div class="row" style="top:88px">
<div class="num">3</div>
<div class="c g0" style="left:33px;width:13px;border:none"></div>
<div class="c w" style="left:46px;width:169px;border-left:1px solid #c9c9c9"><span class="abs tx" style="left:30px">A1010</span></div>
<div class="c l w" style="left:215px;width:121px"><span class="tx">Start Project</span></div>
<div class="c r w" style="left:336px;width:88px"><span class="tn">0.0d</span></div>
<div class="c r w" style="left:424px;width:60px"><span class="tn">0.0d</span></div>
<div class="c l w" style="left:484px;width:72px"><span class="tn">03-Nov-2014</span></div>
<div class="c l w" style="left:556px;width:72px"><span class="tn"></span></div>
<div class="c l w" style="left:628px;width:253px"><span class="tx"></span></div>
<div class="c r w" style="left:881px;width:90px"><span class="tn">$0.00</span></div>
<div class="c r w" style="left:971px;width:99px"><span class="tn">$0.00</span></div>
</div>
<div class="row" style="top:106px">
<div class="num">4</div>
<div class="c g0" style="left:33px;width:13px;border:none"></div>
<div class="c w" style="left:46px;width:169px;border-left:1px solid #c9c9c9"><span class="abs tx" style="left:30px">A1020</span></div>
<div class="c l w" style="left:215px;width:121px"><span class="tx">Project Management</span></div>
<div class="c r w" style="left:336px;width:88px"><span class="tn">15.0d</span></div>
<div class="c r w" style="left:424px;width:60px"><span class="tn">0.0d</span></div>
<div class="c l w" style="left:484px;width:72px"><span class="tn">03-Nov-2014</span></div>
<div class="c l w" style="left:556px;width:72px"><span class="tn">21-Nov-2014</span></div>
<div class="c l w" style="left:628px;width:253px"><span class="tx">PM</span></div>
<div class="c r w" style="left:881px;width:90px"><span class="tn">$11,400.00</span></div>
<div class="c r w" style="left:971px;width:99px"><span class="tn">$0.00</span></div>
</div>
<div class="row" style="top:124px">
<div class="num">5</div>
<div class="c g0" style="left:33px;width:13px;border:none"></div>
<div class="c w" style="left:46px;width:169px;border-left:1px solid #c9c9c9"><span class="abs tx" style="left:30px">A1030</span></div>
<div class="c l w" style="left:215px;width:121px"><span class="tx">Project Complete</span></div>
<div class="c r w" style="left:336px;width:88px"><span class="tn">0.0d</span></div>
<div class="c r w" style="left:424px;width:60px"><span class="tn">0.0d</span></div>
<div class="c l w" style="left:484px;width:72px"><span class="tn"></span></div>
<div class="c l w" style="left:556px;width:72px"><span class="tn">21-Nov-2014</span></div>
<div class="c l w" style="left:628px;width:253px"><span class="tx"></span></div>
<div class="c r w" style="left:881px;width:90px"><span class="tn">$0.00</span></div>
<div class="c r w" style="left:971px;width:99px"><span class="tn">$0.00</span></div>
</div>
<div class="row" style="top:142px">
<div class="num">6</div>
<div class="c g0" style="left:33px;width:13px;border:none"></div>
<div class="c g1" style="left:46px;width:289px;border-right:none"><div class="box" style="left:3px"></div><span class="abs tx" style="left:31px">Demolition Piping</span></div>
<div class="c g1" style="left:335px;width:1px"></div>
<div class="c r g1" style="left:336px;width:88px"><span class="tn">2.0d</span></div>
<div class="c r g1" style="left:424px;width:60px"><span class="tn">0.0d</span></div>
<div class="c l g1" style="left:484px;width:72px"><span class="tn">03-Nov-2014</span></div>
<div class="c l g1" style="left:556px;width:72px"><span class="tn">04-Nov-2014</span></div>
<div class="c l g1" style="left:628px;width:253px"><span class="tx"></span></div>
<div class="c r g1" style="left:881px;width:90px"><span class="tn">$3,648.00</span></div>
<div class="c r g1" style="left:971px;width:99px"><span class="tn">$0.00</span></div>
</div>
<div class="row" style="top:160px">
<div class="num">7</div>
<div class="c g0" style="left:33px;width:13px;border:none"></div>
<div class="c g1" style="left:46px;width:14px;border:none;border-left:1px solid #bcdcd4"></div>
<div class="c w" style="left:60px;width:155px;border-left:1px solid #c9c9c9"><span class="abs tx" style="left:30px">A1040</span></div>
<div class="c l w" style="left:215px;width:121px"><span class="tx">Drain Piping System</span></div>
<div class="c r w" style="left:336px;width:88px"><span class="tn">1.0d</span></div>
<div class="c r w" style="left:424px;width:60px"><span class="tn">0.0d</span></div>
<div class="c l w" style="left:484px;width:72px"><span class="tn">03-Nov-2014</span></div>
<div class="c l w" style="left:556px;width:72px"><span class="tn">03-Nov-2014</span></div>
<div class="c l w" style="left:628px;width:253px"><span class="tx">FOREMAN-1, CLAB, STPI</span></div>
<div class="c r w" style="left:881px;width:90px"><span class="tn">$1,824.00</span></div>
<div class="c r w" style="left:971px;width:99px"><span class="tn">$0.00</span></div>
</div>
<div class="row" style="top:178px">
<div class="num">8</div>
<div class="c g0" style="left:33px;width:13px;border:none"></div>
<div class="c g1" style="left:46px;width:14px;border:none;border-left:1px solid #bcdcd4"></div>
<div class="c w" style="left:60px;width:155px;border-left:1px solid #c9c9c9"><span class="abs tx" style="left:30px">A1050</span></div>
<div class="c l w" style="left:215px;width:121px"><span class="tx">Remove Damaged Pipir</span></div>
<div class="c r w" style="left:336px;width:88px"><span class="tn">1.0d</span></div>
<div class="c r w" style="left:424px;width:60px"><span class="tn">0.0d</span></div>
<div class="c l w" style="left:484px;width:72px"><span class="tn">04-Nov-2014</span></div>
<div class="c l w" style="left:556px;width:72px"><span class="tn">04-Nov-2014</span></div>
<div class="c l w" style="left:628px;width:253px"><span class="tx">FOREMAN-1, CLAB, STPI</span></div>
<div class="c r w" style="left:881px;width:90px"><span class="tn">$1,824.00</span></div>
<div class="c r w" style="left:971px;width:99px"><span class="tn">$0.00</span></div>
</div>
<div class="row" style="top:196px">
<div class="num">9</div>
<div class="c g0" style="left:33px;width:13px;border:none"></div>
<div class="c g1" style="left:46px;width:289px;border-right:none"><div class="box" style="left:3px"></div><span class="abs tx" style="left:31px">Installation Piping</span></div>
<div class="c g1" style="left:335px;width:1px"></div>
<div class="c r g1" style="left:336px;width:88px"><span class="tn">10.0d</span></div>
<div class="c r g1" style="left:424px;width:60px"><span class="tn">0.0d</span></div>
<div class="c l g1" style="left:484px;width:72px"><span class="tn">05-Nov-2014</span></div>
<div class="c l g1" style="left:556px;width:72px"><span class="tn">18-Nov-2014</span></div>
<div class="c l g1" style="left:628px;width:253px"><span class="tx"></span></div>
<div class="c r g1" style="left:881px;width:90px"><span class="tn">$5,472.00</span></div>
<div class="c r g1" style="left:971px;width:99px"><span class="tn">$1,600.00</span></div>
</div>
<div class="row" style="top:214px">
<div class="num">10</div>
<div class="c g0" style="left:33px;width:13px;border:none"></div>
<div class="c g1" style="left:46px;width:14px;border:none;border-left:1px solid #bcdcd4"></div>
<div class="c w" style="left:60px;width:155px;border-left:1px solid #c9c9c9"><span class="abs tx" style="left:30px">A1060</span></div>
<div class="c l w" style="left:215px;width:121px"><span class="tx">Install Piping &amp; Coupling:</span></div>
<div class="c r w" style="left:336px;width:88px"><span class="tn">2.0d</span></div>
<div class="c r w" style="left:424px;width:60px"><span class="tn">0.0d</span></div>
<div class="c l w" style="left:484px;width:72px"><span class="tn">05-Nov-2014</span></div>
<div class="c l w" style="left:556px;width:72px"><span class="tn">06-Nov-2014</span></div>
<div class="c l w" style="left:628px;width:253px"><span class="tx">FOREMAN-1, CLAB, STPI, PIPE, PIPE COUPLING</span></div>
<div class="c r w" style="left:881px;width:90px"><span class="tn">$3,648.00</span></div>
<div class="c r w" style="left:971px;width:99px"><span class="tn">$1,600.00</span></div>
</div>
<div class="row" style="top:232px">
<div class="num">11</div>
<div class="c g0" style="left:33px;width:13px;border:none"></div>
<div class="c g1" style="left:46px;width:14px;border:none;border-left:1px solid #bcdcd4"></div>
<div class="c w" style="left:60px;width:155px;border-left:1px solid #c9c9c9"><span class="abs tx" style="left:30px">A1070</span></div>
<div class="c l w" style="left:215px;width:121px"><span class="tx">Test Piping at Pressure</span></div>
<div class="c r w" style="left:336px;width:88px"><span class="tn">1.0d</span></div>
<div class="c r w" style="left:424px;width:60px"><span class="tn">0.0d</span></div>
<div class="c l w" style="left:484px;width:72px"><span class="tn">07-Nov-2014</span></div>
<div class="c l w" style="left:556px;width:72px"><span class="tn">07-Nov-2014</span></div>
<div class="c l w" style="left:628px;width:253px"><span class="tx">FOREMAN-1, CLAB, STPI</span></div>
<div class="c r w" style="left:881px;width:90px"><span class="tn">$1,824.00</span></div>
<div class="c r w" style="left:971px;width:99px"><span class="tn">$0.00</span></div>
</div>
<div class="row" style="top:250px">
<div class="num">12</div>
<div class="c g0" style="left:33px;width:13px;border:none"></div>
<div class="c g1" style="left:46px;width:14px;border:none;border-left:1px solid #bcdcd4"></div>
<div class="c sel" style="left:33px;width:27px;border:none"></div><div class="abs" style="left:46px;top:0;width:1px;height:17px;background:#8a9cc8"></div>
<div class="c sel" style="left:60px;width:155px;border-left:1px solid #c9c9c9"><span class="abs tx" style="left:30px">A1080</span></div>
<div class="c l sel" style="left:215px;width:121px"><span class="tx">Insulate Piping</span></div>
<div class="c r sel" style="left:336px;width:88px"><span class="tn">4.0d</span></div>
<div class="c r sel" style="left:424px;width:60px"><span class="tn">0.0d</span></div>
<div class="c l sel" style="left:484px;width:72px"><span class="tn">13-Nov-2014</span></div>
<div class="c l sel" style="left:556px;width:72px"><span class="tn">18-Nov-2014</span></div>
<div class="c l sel" style="left:628px;width:253px"><span class="tx"></span></div>
<div class="c l" style="left:881px;width:90px;background:#fff;color:#000;border:none;border-top:1px solid #606060;border-left:1px solid #808080;line-height:15px;padding-left:2px"><span class="tn">4000</span><span style="display:inline-block;width:1px;height:12px;background:#000;vertical-align:-2px;margin-left:-3px"></span></div>
<div class="c r sel" style="left:971px;width:99px"><span class="tn">$0.00</span></div>
</div>
<div class="row" style="top:268px">
<div class="num">13</div>
<div class="c g0" style="left:33px;width:13px;border:none"></div>
<div class="c g1" style="left:46px;width:289px;border-right:none"><div class="box" style="left:3px"></div><span class="abs tx" style="left:31px">Installation Thrust Block</span></div>
<div class="c g1" style="left:335px;width:1px"></div>
<div class="c r g1" style="left:336px;width:88px"><span class="tn">7.0d</span></div>
<div class="c r g1" style="left:424px;width:60px"><span class="tn">0.0d</span></div>
<div class="c l g1" style="left:484px;width:72px"><span class="tn">10-Nov-2014</span></div>
<div class="c l g1" style="left:556px;width:72px"><span class="tn">18-Nov-2014</span></div>
<div class="c l g1" style="left:628px;width:253px"><span class="tx"></span></div>
<div class="c r g1" style="left:881px;width:90px"><span class="tn">$5,672.00</span></div>
<div class="c r g1" style="left:971px;width:99px"><span class="tn">$500.00</span></div>
</div>
<div class="row" style="top:286px">
<div class="num">14</div>
<div class="c g0" style="left:33px;width:13px;border:none"></div>
<div class="c g1" style="left:46px;width:14px;border:none;border-left:1px solid #bcdcd4"></div>
<div class="c w" style="left:60px;width:155px;border-left:1px solid #c9c9c9"><span class="abs tx" style="left:30px">A1090</span></div>
<div class="c l w" style="left:215px;width:121px"><span class="tx">Set Forms</span></div>
<div class="c r w" style="left:336px;width:88px"><span class="tn">1.0d</span></div>
<div class="c r w" style="left:424px;width:60px"><span class="tn">0.0d</span></div>
<div class="c l w" style="left:484px;width:72px"><span class="tn">10-Nov-2014</span></div>
<div class="c l w" style="left:556px;width:72px"><span class="tn">10-Nov-2014</span></div>
<div class="c l w" style="left:628px;width:253px"><span class="tx">FOREMAN-1, CLAB, CONCRETE F</span></div>
<div class="c r w" style="left:881px;width:90px"><span class="tn">$2,048.00</span></div>
<div class="c r w" style="left:971px;width:99px"><span class="tn">$300.00</span></div>
</div>
<div class="row" style="top:304px">
<div class="num">15</div>
<div class="c g0" style="left:33px;width:13px;border:none"></div>
<div class="c g1" style="left:46px;width:14px;border:none;border-left:1px solid #bcdcd4"></div>
<div class="c w" style="left:60px;width:155px;border-left:1px solid #c9c9c9"><span class="abs tx" style="left:30px">A1100</span></div>
<div class="c l w" style="left:215px;width:121px"><span class="tx">Pour Concrete</span></div>
<div class="c r w" style="left:336px;width:88px"><span class="tn">1.0d</span></div>
<div class="c r w" style="left:424px;width:60px"><span class="tn">0.0d</span></div>
<div class="c l w" style="left:484px;width:72px"><span class="tn">11-Nov-2014</span></div>
<div class="c l w" style="left:556px;width:72px"><span class="tn">11-Nov-2014</span></div>
<div class="c l w" style="left:628px;width:253px"><span class="tx">FOREMAN-1, CLAB, CONCRETE</span></div>
<div class="c r w" style="left:881px;width:90px"><span class="tn">$2,048.00</span></div>
<div class="c r w" style="left:971px;width:99px"><span class="tn">$200.00</span></div>
</div>
<div class="row" style="top:322px">
<div class="num">16</div>
<div class="c g0" style="left:33px;width:13px;border:none"></div>
<div class="c g1" style="left:46px;width:14px;border:none;border-left:1px solid #bcdcd4"></div>
<div class="c w" style="left:60px;width:155px;border-left:1px solid #c9c9c9"><span class="abs tx" style="left:30px">A1110</span></div>
<div class="c l w" style="left:215px;width:121px"><span class="tx">Strike Forms</span></div>
<div class="c r w" style="left:336px;width:88px"><span class="tn">1.0d</span></div>
<div class="c r w" style="left:424px;width:60px"><span class="tn">0.0d</span></div>
<div class="c l w" style="left:484px;width:72px"><span class="tn">18-Nov-2014</span></div>
<div class="c l w" style="left:556px;width:72px"><span class="tn">18-Nov-2014</span></div>
<div class="c l w" style="left:628px;width:253px"><span class="tx">FOREMAN-1, CLAB</span></div>
<div class="c r w" style="left:881px;width:90px"><span class="tn">$1,576.00</span></div>
<div class="c r w" style="left:971px;width:99px"><span class="tn">$0.00</span></div>
</div>
<div class="row" style="top:340px">
<div class="num">17</div>
<div class="c g0" style="left:33px;width:13px;border:none"></div>
<div class="c g1" style="left:46px;width:289px;border-right:none"><div class="box" style="left:3px"></div><span class="abs tx" style="left:31px">Quality Assurance</span></div>
<div class="c g1" style="left:335px;width:1px"></div>
<div class="c r g1" style="left:336px;width:88px"><span class="tn">3.0d</span></div>
<div class="c r g1" style="left:424px;width:60px"><span class="tn">0.0d</span></div>
<div class="c l g1" style="left:484px;width:72px"><span class="tn">19-Nov-2014</span></div>
<div class="c l g1" style="left:556px;width:72px"><span class="tn">21-Nov-2014</span></div>
<div class="c l g1" style="left:628px;width:253px"><span class="tx"></span></div>
<div class="c r g1" style="left:881px;width:90px"><span class="tn">$0.00</span></div>
<div class="c r g1" style="left:971px;width:99px"><span class="tn">$0.00</span></div>
</div>
<div class="row" style="top:358px">
<div class="num">18</div>
<div class="c g0" style="left:33px;width:13px;border:none"></div>
<div class="c g1" style="left:46px;width:14px;border:none;border-left:1px solid #bcdcd4"></div>
<div class="c w" style="left:60px;width:155px;border-left:1px solid #c9c9c9"><span class="abs tx" style="left:30px">A1120</span></div>
<div class="c l w" style="left:215px;width:121px"><span class="tx">Write Quality Assurance</span></div>
<div class="c r w" style="left:336px;width:88px"><span class="tn">2.0d</span></div>
<div class="c r w" style="left:424px;width:60px"><span class="tn">0.0d</span></div>
<div class="c l w" style="left:484px;width:72px"><span class="tn">19-Nov-2014</span></div>
<div class="c l w" style="left:556px;width:72px"><span class="tn">20-Nov-2014</span></div>
<div class="c l w" style="left:628px;width:253px"><span class="tx"></span></div>
<div class="c r w" style="left:881px;width:90px"><span class="tn">$0.00</span></div>
<div class="c r w" style="left:971px;width:99px"><span class="tn">$0.00</span></div>
</div>
<div class="row last" style="top:376px">
<div class="num">19</div>
<div class="c g0" style="left:33px;width:13px;border:none"></div>
<div class="c g1" style="left:46px;width:14px;border:none;border-left:1px solid #bcdcd4"></div>
<div class="c w" style="left:60px;width:155px;border-left:1px solid #c9c9c9"><span class="abs tx" style="left:30px">A1130</span></div>
<div class="c l w" style="left:215px;width:121px"><span class="tx">Final Quality Assurance</span></div>
<div class="c r w" style="left:336px;width:88px"><span class="tn">1.0d</span></div>
<div class="c r w" style="left:424px;width:60px"><span class="tn">0.0d</span></div>
<div class="c l w" style="left:484px;width:72px"><span class="tn">21-Nov-2014</span></div>
<div class="c l w" style="left:556px;width:72px"><span class="tn">21-Nov-2014</span></div>
<div class="c l w" style="left:628px;width:253px"><span class="tx"></span></div>
<div class="c r w" style="left:881px;width:90px"><span class="tn">$0.00</span></div>
<div class="c r w" style="left:971px;width:99px"><span class="tn">$0.00</span></div>
</div>
<div class="abs" style="left:1069px;top:52px;width:1px;height:371px;background:#707070"></div><div class="abs" style="left:1070px;top:0;width:3px;height:423px;background:#e4e4ec"></div>
</div>
<div id="wm">How Do You Know If Your In Labor</div>
</div></div></body></html>
